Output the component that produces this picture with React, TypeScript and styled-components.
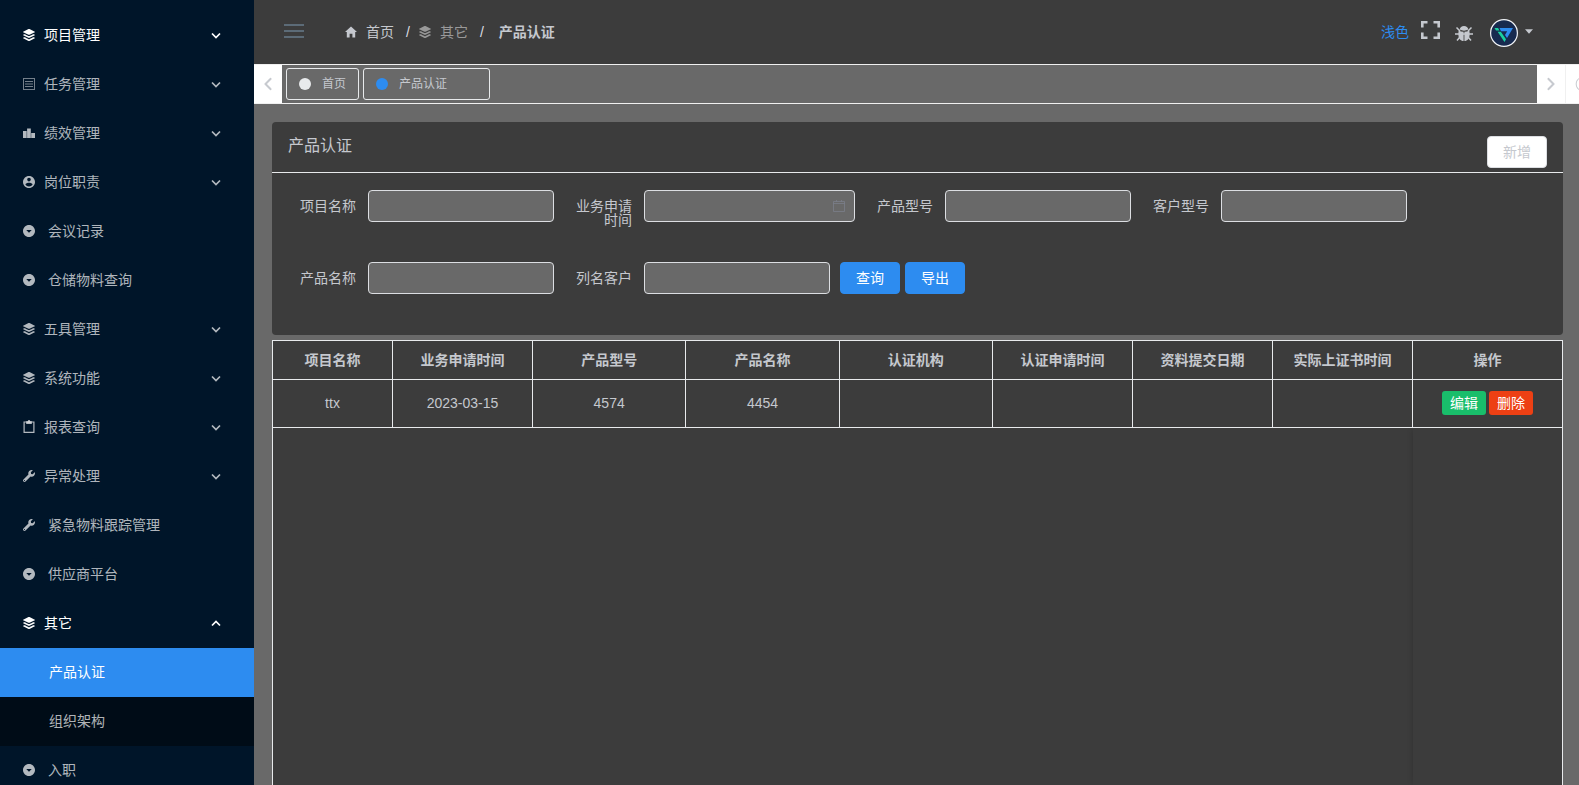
import React from 'react';
import styled, { createGlobalStyle, css } from 'styled-components';
import {
  IoLogoBuffer,
  IoMdContact,
  IoMdArrowDropdownCircle,
  IoMdHome,
  IoIosArrowBack,
  IoIosArrowForward,
  IoIosCloseCircleOutline,
} from 'react-icons/io';
import { FaWrench } from 'react-icons/fa';

const color = {
  sider: '#001529',
  siderSub: '#000c17',
  primary: '#2d8cf0',
  panel: '#3c3c3c',
  page: '#696969',
  text: '#c5c8ce',
  line: '#e8eaec',
  field: '#dcdee2',
};

const GlobalStyle = createGlobalStyle`
  *, *::before, *::after { box-sizing: border-box; }
  body {
    margin: 0;
    background: ${color.page};
    color: ${color.text};
    font: 14px/20px "Liberation Sans", "Noto Sans CJK SC", sans-serif;
  }
  button, input { font: inherit; color: inherit; }
  button { cursor: pointer; }
  a { color: inherit; text-decoration: none; }
  ul, ol, h1 { margin: 0; padding: 0; list-style: none; font-weight: normal; }
`;

const Shell = styled.div`
  display: flex;
  height: 100vh;
  overflow: hidden;
`;

/* Sidebar */

const Sider = styled.nav`
  flex: 0 0 254px;
  padding-top: 11px;
  overflow: hidden auto;
  scrollbar-width: none;
  background: ${color.sider};
  color: rgba(255, 255, 255, 0.7);
`;

const entry = css`
  display: flex;
  align-items: center;
  width: 100%;
  height: 49px;
  padding: 0 32px 2px 23px;
  border: 0;
  background: none;
  text-align: left;
  svg { flex: none; }
`;

const GroupButton = styled.button<{ $bright?: boolean }>`
  ${entry}
  gap: 9px;
  color: ${(p) => (p.$bright ? '#fff' : 'inherit')};
  span { flex: 1; }
`;

const EntryLink = styled.a`
  ${entry}
  gap: 13px;
`;

const SubLink = styled.a<{ $active?: boolean }>`
  ${entry}
  padding-left: 49px;
  background: ${(p) => (p.$active ? color.primary : color.siderSub)};
  color: ${(p) => (p.$active ? '#fff' : 'inherit')};
`;

/* Icons: the view boxes are cropped so that each glyph fills its 12px square */

const LayersIcon = () => <IoLogoBuffer size={12} viewBox="64 64 384 384" />;
const ContactIcon = () => <IoMdContact size={12} viewBox="48 48 416 416" />;
const DropCircleIcon = () => <IoMdArrowDropdownCircle size={12} viewBox="48 48 416 416" />;
const HomeIcon = () => <IoMdHome size={12} viewBox="48 48 416 416" />;
const WrenchIcon = () => <FaWrench size={12} />;

const ListBoxIcon = () => (
  <svg width="12" height="12" viewBox="0 0 12 12" fill="none" stroke="currentColor" strokeOpacity="0.65">
    <rect x="0.5" y="0.5" width="11" height="11" />
    <path d="M2 3.5h8M2 6h8M2 8.500h8" />
  </svg>
);

const PodiumIcon = () => (
  <svg width="12" height="12" viewBox="0 0 12 12" fill="currentColor">
    <path d="M0 4h3.700v7H0zM4.100 1.500h3.700V11H4.100zM8.200 6H12v5H8.200z" />
  </svg>
);

const ClipboardIcon = () => (
  <svg width="12" height="13" viewBox="0 0 12 13" fill="none" stroke="currentColor" strokeWidth="1.200">
    <path d="M1.100 2h9.800v10.300H1.100z" />
    <path d="M3.200 1.200h1.600a1.200 1.200 0 0 1 2.400 0h1.600V4H3.200z" fill="currentColor" stroke="none" />
  </svg>
);

const ExpandIcon = () => (
  <svg width="19" height="18" viewBox="0 0 19 18" fill="none" stroke="currentColor" strokeWidth="2.600">
    <path d="M1.300 6.500V1.300h5.200M12.500 1.300h5.200v5.200M17.700 11.500v5.200h-5.200M6.500 16.700H1.300v-5.200" />
  </svg>
);

const BugIcon = () => (
  <svg width="18" height="16" viewBox="0 0 18 16" fill="none" stroke="currentColor">
    <path d="M1.500 2.500 5 6M16.500 2.500 13 6M0 9h18M2 15.500 5 12M16 15.500 13 12" strokeWidth="1.500" />
    <path d="M4.600 4.600a4.500 4.600 0 0 1 8.800 0Q9 6.800 4.600 4.600z" fill="currentColor" stroke="none" />
    <path d="M3.700 5.400Q6 6.700 8.600 6.800V16C5.500 16 3.400 13.500 3.400 9.500c0-1.700 0-3 .3-4.100zM14.300 5.400Q12 6.700 9.400 6.800V16c3.100 0 5.200-2.500 5.200-6.500 0-1.700 0-3-.3-4.100z" fill="currentColor" stroke="none" />
  </svg>
);

const CaretIcon = () => (
  <svg width="8" height="5" viewBox="0 0 8 5" fill="currentColor">
    <path d="M0 .3h8L4 4.700z" />
  </svg>
);

const Chevron = ({ up }: { up?: boolean }) => (
  <svg width="12" height="12" viewBox="0 0 12 12" fill="none" stroke="currentColor" strokeWidth="1.700">
    <path d={up ? 'M2 8.500 6 4.500l4 4' : 'M2 4.500l4 4 4-4'} />
  </svg>
);

const CalendarIcon = () => (
  <svg width="14" height="14" viewBox="0 0 14 14" fill="none" stroke="currentColor" strokeOpacity="0.6">
    <path d="M1.500 2.500h11v10h-11zM1.500 4.500h11M4.500 1v1.500M9.500 1v1.500" />
  </svg>
);

type MenuEntry = {
  label: string;
  icon: React.ReactNode;
  group?: boolean;
  bright?: boolean;
  children?: { label: string; active?: boolean }[];
};

const menu: MenuEntry[] = [
  { label: '项目管理', icon: <LayersIcon />, group: true, bright: true },
  { label: '任务管理', icon: <ListBoxIcon />, group: true },
  { label: '绩效管理', icon: <PodiumIcon />, group: true },
  { label: '岗位职责', icon: <ContactIcon />, group: true },
  { label: '会议记录', icon: <DropCircleIcon /> },
  { label: '仓储物料查询', icon: <DropCircleIcon /> },
  { label: '五具管理', icon: <LayersIcon />, group: true },
  { label: '系统功能', icon: <LayersIcon />, group: true },
  { label: '报表查询', icon: <ClipboardIcon />, group: true },
  { label: '异常处理', icon: <WrenchIcon />, group: true },
  { label: '紧急物料跟踪管理', icon: <WrenchIcon /> },
  { label: '供应商平台', icon: <DropCircleIcon /> },
  {
    label: '其它',
    icon: <LayersIcon />,
    group: true,
    bright: true,
    children: [{ label: '产品认证', active: true }, { label: '组织架构' }],
  },
  { label: '入职', icon: <DropCircleIcon /> },
];

const SideMenu = () => (
  <Sider>
    <ul>
      {menu.map((m) => (
        <li key={m.label}>
          {m.group ? (
            <GroupButton type="button" $bright={m.bright} aria-expanded={!!m.children}>
              {m.icon}
              <span>{m.label}</span>
              <Chevron up={!!m.children} />
            </GroupButton>
          ) : (
            <EntryLink href="#">
              {m.icon}
              <span>{m.label}</span>
            </EntryLink>
          )}
          {m.children && (
            <ul>
              {m.children.map((c) => (
                <li key={c.label}>
                  <SubLink href="#" $active={c.active}>{c.label}</SubLink>
                </li>
              ))}
            </ul>
          )}
        </li>
      ))}
    </ul>
  </Sider>
);

/* Top bar */

const Main = styled.div`
  flex: 1;
  min-width: 0;
  display: flex;
  flex-direction: column;
`;

const TopBar = styled.header`
  flex: 0 0 64px;
  display: flex;
  align-items: center;
  justify-content: space-between;
  padding: 0 46px 0 30px;
  background: ${color.panel};
`;

const TopGroup = styled.div`
  display: flex;
  align-items: center;
`;

const IconButton = styled.button`
  display: flex;
  padding: 0;
  border: 0;
  background: none;
`;

const MenuToggle = styled(IconButton)`
  margin-right: 41px;
  padding-bottom: 2px;
  color: #5c6b77;
`;

const Crumbs = styled.ol`
  display: flex;
  align-items: center;
  li + li::before {
    content: '/';
    margin: 0 9px 0 12px;
    color: ${color.field};
  }
  li:last-child::before { margin-right: 15px; }
`;

const Crumb = styled.li`
  display: flex;
  align-items: center;
  a, span { display: flex; align-items: center; gap: 9px; }
  span { color: #999; }
`;

const ThemeLink = styled(IconButton)`
  margin-right: 12px;
  color: ${color.primary};
`;

const ExpandButton = styled(IconButton)`
  margin-right: 15px;
  padding-bottom: 4px;
`;

const BugButton = styled(IconButton)`
  margin-right: 17px;
  padding-top: 2px;
`;

const UserButton = styled(IconButton)`
  align-items: center;
  gap: 7px;
  padding-top: 2px;
  svg:last-child { margin-bottom: 4px; }
`;

const Avatar = () => (
  <svg width="28" height="28" viewBox="0 0 28 28">
    <circle cx="14" cy="14" r="13.400" fill="#172a4f" stroke="#f2f4f7" strokeWidth="1.200" />
    <path d="M9.500 9H23l-6 10-2-3 2.200-3.800H11z" fill="#2d8cf0" />
    <path d="M4.500 9h3.600l1.400 2.600H6zM7.600 12.800h3.200l5.200 7.500-1.500 2.700z" fill="#19d0a0" />
  </svg>
);

/* Tab strip */

const TabStrip = styled.div`
  flex: 0 0 40px;
  display: flex;
  overflow: hidden;
  border-top: 1px solid #f0f0f0;
  border-bottom: 1px solid #f0f0f0;
`;

const StripButton = styled.button<{ $edge?: boolean }>`
  flex: none;
  display: flex;
  align-items: center;
  justify-content: ${(p) => (p.$edge ? 'flex-start' : 'center')};
  width: ${(p) => (p.$edge ? '14px' : '28px')};
  padding: ${(p) => (p.$edge ? '0 0 0 8px' : '0')};
  overflow: hidden;
  border: 0;
  border-left: ${(p) => (p.$edge ? '1px solid #f0f0f0' : '0')};
  background: #fff;
  color: ${color.text};
  svg { flex: none; stroke: currentColor; stroke-width: ${(p) => (p.$edge ? 0 : 12)}; }
`;

const Tabs = styled.div`
  flex: 1;
  display: flex;
  gap: 4px;
  padding: 3px 4px 2px;
`;

const Tab = styled.a<{ $active?: boolean }>`
  display: flex;
  align-items: center;
  gap: 11px;
  height: 32px;
  padding: 0 ${(p) => (p.$active ? '42px' : '12px')} 0 12px;
  border: 1px solid ${color.line};
  border-radius: 3px;
  font-size: 12px;
  &::before {
    content: '';
    width: 12px;
    height: 12px;
    border-radius: 50%;
    background: ${(p) => (p.$active ? color.primary : color.line)};
  }
`;

/* Content */

const Content = styled.main`
  flex: 1;
  min-height: 0;
  display: flex;
  flex-direction: column;
  gap: 5px;
  padding: 18px 16px 0 18px;
`;

const Card = styled.section`
  border-radius: 4px;
  background: ${color.panel};
`;

const CardHead = styled.div`
  display: flex;
  justify-content: space-between;
  height: 51px;
  padding: 14px 16px 0 16px;
  border-bottom: 1px solid ${color.line};
`;

const Title = styled.h1`
  font-size: 16px;
`;

const Button = styled.button<{ $plain?: boolean }>`
  width: 60px;
  height: 32px;
  padding: 0;
  border: 1px solid ${(p) => (p.$plain ? color.field : color.primary)};
  border-radius: 4px;
  background: ${(p) => (p.$plain ? '#fff' : color.primary)};
  color: ${(p) => (p.$plain ? color.text : '#fff')};
`;

const SearchForm = styled.form`
  display: flex;
  flex-wrap: wrap;
  gap: 40px 10px;
  padding: 17px 16px 41px;
`;

const Field = styled.div`
  display: flex;
  height: 32px;
`;

const Label = styled.label`
  width: 80px;
  padding: 9px 12px 0 10px;
  line-height: 14px;
  text-align: right;
`;

const FieldBox = styled.div<{ $wide?: boolean }>`
  display: flex;
  align-items: center;
  width: ${(p) => (p.$wide ? '211px' : '186px')};
  border: 1px solid ${color.field};
  border-radius: 4px;
  background: ${color.page};
  svg { flex: none; margin-right: 8px; color: #808695; }
`;

const Input = styled.input`
  flex: 1;
  min-width: 0;
  height: 30px;
  padding: 0 7px;
  border: 0;
  outline: 0;
  background: none;
`;

const Actions = styled.div`
  display: flex;
  gap: 5px;
`;

const TableBox = styled.div`
  flex: 1;
  min-height: 0;
  display: flex;
  flex-direction: column;
  border: 1px solid ${color.line};
  border-bottom: 0;
  background: ${color.panel};
`;

const Table = styled.table`
  width: 100%;
  table-layout: fixed;
  border-spacing: 0;
  text-align: center;
  th, td {
    padding: 0;
    border-right: 1px solid ${color.line};
    border-bottom: 1px solid ${color.line};
  }
  th { height: 39px; font-weight: bold; }
  td { height: 48px; padding-bottom: 2px; }
  tr > :last-child { border-right: 0; }
`;

const Blank = styled.div`
  flex: 1;
  display: flex;
  justify-content: flex-end;
  overflow: hidden;
  &::after {
    content: '';
    width: 149px;
    box-shadow: -2px 0 6px -2px rgba(0, 0, 0, 0.2);
  }
`;

const RowActions = styled.div`
  display: flex;
  justify-content: center;
  gap: 3px;
`;

const SmallButton = styled.button<{ $danger?: boolean }>`
  width: 44px;
  height: 24px;
  padding: 0;
  border: 0;
  border-radius: 3px;
  background: ${(p) => (p.$danger ? '#ed4014' : '#19be6b')};
  color: #fff;
`;

const fields = [
  { id: 'project', label: '项目名称' },
  { id: 'applied', label: '业务申请时间', date: true },
  { id: 'model', label: '产品型号' },
  { id: 'customerModel', label: '客户型号' },
  { id: 'product', label: '产品名称' },
  { id: 'customer', label: '列名客户' },
];

const columns: { title: string; width?: number }[] = [
  { title: '项目名称', width: 120 },
  { title: '业务申请时间', width: 140 },
  { title: '产品型号' },
  { title: '产品名称' },
  { title: '认证机构' },
  { title: '认证申请时间', width: 140 },
  { title: '资料提交日期', width: 140 },
  { title: '实际上证书时间', width: 140 },
  { title: '操作', width: 149 },
];

const rows = [['ttx', '2023-03-15', '4574', '4454', '', '', '', '']];

export default function App() {
  return (
    <>
      <GlobalStyle />
      <Shell>
        <SideMenu />
        <Main>
          <TopBar>
            <TopGroup>
              <MenuToggle type="button" aria-label="菜单">
                <svg width="20" height="14" viewBox="0 0 20 14" stroke="currentColor" strokeWidth="1.800">
                  <path d="M0 1h20M0 7h20M0 13h20" />
                </svg>
              </MenuToggle>
              <Crumbs>
                <Crumb><a href="#"><HomeIcon />首页</a></Crumb>
                <Crumb><span><LayersIcon />其它</span></Crumb>
                <Crumb><b>产品认证</b></Crumb>
              </Crumbs>
            </TopGroup>
            <TopGroup>
              <ThemeLink type="button">浅色</ThemeLink>
              <ExpandButton type="button" aria-label="全屏"><ExpandIcon /></ExpandButton>
              <BugButton type="button" aria-label="错误日志"><BugIcon /></BugButton>
              <UserButton type="button" aria-label="用户">
                <Avatar />
                <CaretIcon />
              </UserButton>
            </TopGroup>
          </TopBar>
          <TabStrip>
            <StripButton type="button" aria-label="向左"><IoIosArrowBack size={18} /></StripButton>
            <Tabs>
              <Tab href="#">首页</Tab>
              <Tab href="#" $active>产品认证</Tab>
            </Tabs>
            <StripButton type="button" aria-label="向右"><IoIosArrowForward size={18} /></StripButton>
            <StripButton type="button" $edge aria-label="关闭"><IoIosCloseCircleOutline size={18} /></StripButton>
          </TabStrip>
          <Content>
            <Card>
              <CardHead>
                <Title>产品认证</Title>
                <Button type="button" $plain>新增</Button>
              </CardHead>
              <SearchForm>
                {fields.map((f) => (
                  <Field key={f.id}>
                    <Label htmlFor={f.id}>{f.label}</Label>
                    <FieldBox $wide={f.date}>
                      <Input id={f.id} type="text" />
                      {f.date && <CalendarIcon />}
                    </FieldBox>
                  </Field>
                ))}
                <Actions>
                  <Button type="button">查询</Button>
                  <Button type="button">导出</Button>
                </Actions>
              </SearchForm>
            </Card>
            <TableBox>
              <Table>
                <colgroup>
                  {columns.map((c) => <col key={c.title} width={c.width} />)}
                </colgroup>
                <thead>
                  <tr>{columns.map((c) => <th key={c.title} scope="col">{c.title}</th>)}</tr>
                </thead>
                <tbody>
                  {rows.map((r) => (
                    <tr key={r[0]}>
                      {r.map((v, i) => <td key={columns[i].title}>{v}</td>)}
                      <td>
                        <RowActions>
                          <SmallButton type="button">编辑</SmallButton>
                          <SmallButton type="button" $danger>删除</SmallButton>
                        </RowActions>
                      </td>
                    </tr>
                  ))}
                </tbody>
              </Table>
              <Blank />
            </TableBox>
          </Content>
        </Main>
      </Shell>
    </>
  );
}
